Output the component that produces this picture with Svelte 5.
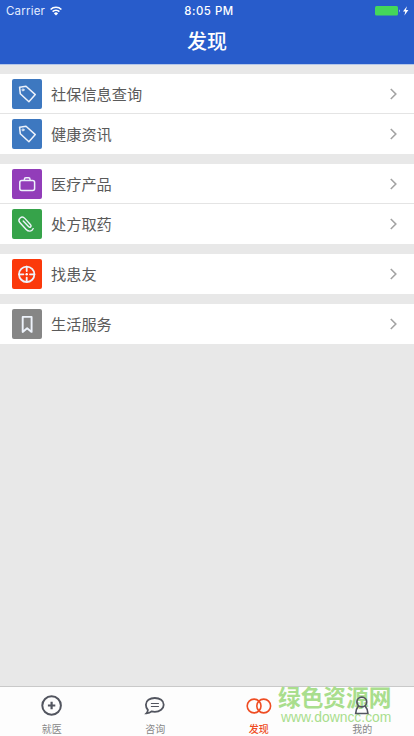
<svelte:options runes={true} />

<script lang="ts">
  type Item = { label: string; icon: string; color: string }

  const groups: Item[][] = [
    [
      { label: '社保信息查询', icon: 'tag', color: '#3d78c0' },
      { label: '健康资讯', icon: 'tag', color: '#3d78c0' },
    ],
    [
      { label: '医疗产品', icon: 'bag', color: '#923db9' },
      { label: '处方取药', icon: 'clip', color: '#36a34a' },
    ],
    [{ label: '找患友', icon: 'target', color: '#fb390b' }],
    [{ label: '生活服务', icon: 'bookmark', color: '#868686' }],
  ]

  const tabs = [
    { label: '就医', icon: 'plus' },
    { label: '咨询', icon: 'chat' },
    { label: '发现', icon: 'rings' },
    { label: '我的', icon: 'user' },
  ]

  let active = $state('发现')
</script>

<div class="app">
  <header>
    <div class="status">
      <div class="carrier">
        <span>Carrier</span>
        <svg width="12" height="10" viewBox="0 0 12 10" fill="none" stroke="#fff" stroke-width="1.6">
          <path d="M.6 3.500a7.700 7.700 0 0 1 10.800 0M2.600 5.700a4.900 4.900 0 0 1 6.800 0" />
          <path d="M6 9.500 3.900 7.400a3 3 0 0 1 4.200 0z" fill="#fff" stroke="none" />
        </svg>
      </div>
      <span class="time">8:05 PM</span>
      <div class="power">
        <svg width="35" height="12" viewBox="0 0 35 12">
          <rect x="0" y="1" width="23" height="9.500" rx="1.500" fill="#44d75a" />
          <path d="M24 4.200q1.400 1.600 0 3.200z" fill="#dce7fb" />
          <path d="M31.900 1.200 28 6.400h2.300l-.9 4.200 4-5.500h-2.400z" fill="#fff" />
        </svg>
      </div>
    </div>
    <h1>发现</h1>
  </header>

  <main>
    {#each groups as group}
      <div class="group">
        {#each group as item}
          <div class="row">
            <div class="tile" style:background={item.color}>
              <svg width="30" height="30" viewBox="0 0 30 30">
                {#if item.icon === 'tag'}
                  <path d="M7.600 8.200 14 7.200l9.300 8.400-6.400 7.200-8.600-8z" />
                  <circle cx="11" cy="10.900" r="1" stroke-width="1" />
                {:else if item.icon === 'bag'}
                  <rect x="7.800" y="11.500" width="14.800" height="9.900" rx="2" />
                  <path d="M12.400 11.300v-1q0-1.500 1.500-1.500h2.600q1.500 0 1.500 1.500v1" />
                {:else if item.icon === 'clip'}
                  <path
                    d="m11.200 11.900 5.300 5.700c1.600 1.600 3.500-.2 2.100-1.900l-5.800-6.300c-3-3.200-7.700.8-5 4.200l6.400 6.900c2.400 2.500 5.900 2 7-.9"
                    stroke-width="1.400"
                  />
                {:else if item.icon === 'target'}
                  <circle cx="14.700" cy="15.300" r="7.700" stroke-width="1.800" />
                  <path d="M14.700 7.600V12M14.700 18.600V23M7 15.300h4.400M18 15.300h4.400" stroke-width="1.800" />
                  <circle cx="14.700" cy="15.300" r="1.200" class="dot" />
                {:else}
                  <path d="M10.700 7.900h8.900v15l-4.450-3.600-4.450 3.600z" stroke-width="1.900" />
                {/if}
              </svg>
            </div>
            <span class="label">{item.label}</span>
            <svg class="chevron" width="7" height="12" viewBox="0 0 7 12">
              <path d="m.8 1 5 5-5 5" />
            </svg>
          </div>
        {/each}
      </div>
    {/each}
  </main>

  <nav>
    {#each tabs as tab}
      <button class:active={active === tab.label} onclick={() => (active = tab.label)}>
        <svg width="26" height="24" viewBox="0 0 26 24">
          {#if tab.icon === 'plus'}
            <circle cx="12.600" cy="11.500" r="9.300" />
            <path d="M12.600 7.800v7.400M8.900 11.500h7.400" stroke-width="2.200" />
          {:else if tab.icon === 'chat'}
            <path
              d="M12.800 4c5 0 8.900 2.700 8.900 6.700s-3.900 7.100-8.900 7.100c-1.200 0-2.200-.1-3.200-.4-1.300 1.300-3 1.900-5.200 1.900.9-.9 1.400-2 1.500-3.300-1.300-1.300-2-3.200-2-5.300C3.900 6.700 7.800 4 12.800 4z"
              stroke-width="1.800"
            />
            <path d="M8.900 9.500h8M8.900 12.500h8" stroke-width="1.200" />
          {:else if tab.icon === 'rings'}
            <circle cx="8.100" cy="12" r="6.900" stroke-width="1.600" />
            <circle cx="17.700" cy="12" r="6.900" stroke-width="1.600" />
          {:else}
            <circle cx="12.800" cy="8" r="4.900" stroke-width="1.700" />
            <path d="M9.600 11.700c-1.700 2-2.700 4.500-2.900 7.800h12.200c-.2-3.300-1.200-5.800-2.900-7.800" stroke-width="1.700" />
          {/if}
        </svg>
        <span>{tab.label}</span>
      </button>
    {/each}
    <div class="watermark">
      <strong>绿色资源网</strong>
      <span>www.downcc.com</span>
    </div>
  </nav>
</div>

<style>
  :global(body) {
    margin: 0;
  }

  .app {
    display: flex;
    flex-direction: column;
    width: 100%;
    height: 100vh;
    overflow: hidden;
    background: #e8e8e8;
    font-family: 'Noto Sans CJK SC', sans-serif;
  }

  header {
    box-sizing: border-box;
    height: 65px;
    flex-shrink: 0;
    background: #285ccb;
    border-bottom: 1px solid #b4c6e8;
    color: #fff;
  }

  .status {
    display: grid;
    grid-template-columns: 1fr auto 1fr;
    align-items: center;
    height: 20px;
    padding: 0 4px 0 6px;
    font-family: Inter, sans-serif;
    font-size: 11.4px;
    line-height: 20px;
  }

  .carrier {
    display: flex;
    align-items: center;
    gap: 5px;
    color: #e3ecff;
    font-size: 11.5px;
    letter-spacing: 0.2px;
  }
  .carrier span {
    padding-top: 1px;
  }

  .time {
    padding: 1px 0 0 2px;
    font-weight: 500;
    letter-spacing: 0.5px;
  }

  .power {
    display: flex;
    justify-content: flex-end;
  }

  h1 {
    margin: 0;
    font-size: 20px;
    font-weight: 500;
    line-height: 42px;
    text-align: center;
  }

  main {
    display: flex;
    flex: 1;
    flex-direction: column;
    gap: 10px;
    padding-top: 9px;
  }

  .group {
    background: #fff;
  }

  .row {
    box-sizing: border-box;
    display: flex;
    align-items: center;
    height: 40px;
    padding: 0 17px 0 12px;
  }
  .row + .row {
    box-shadow: 0 -1px #e4e4e4;
  }

  .tile {
    width: 30px;
    height: 30px;
    border-radius: 2px;
  }
  .tile svg {
    display: block;
    fill: none;
    stroke: #eef3fb;
    stroke-width: 1.5;
    stroke-linecap: round;
    stroke-linejoin: round;
  }
  .tile .dot {
    fill: #fff;
    stroke: none;
  }

  .label {
    flex: 1;
    margin-left: 9px;
    padding-bottom: 2px;
    color: #5a5a5a;
    font-size: 15.2px;
    line-height: 38px;
  }

  .chevron {
    fill: none;
    stroke: #a3a3a3;
    stroke-width: 1.6;
  }

  nav {
    position: relative;
    isolation: isolate;
    box-sizing: border-box;
    display: grid;
    grid-template-columns: repeat(4, 1fr);
    height: 50px;
    flex-shrink: 0;
    border-top: 1px solid #c9c9c9;
    background: #fdfdfd;
  }

  button {
    display: flex;
    flex-direction: column;
    align-items: center;
    gap: 5px;
    padding: 7px 0 0;
    border: 0;
    background: none;
    color: #878787;
    font: inherit;
    font-size: 10px;
    line-height: 12px;
  }
  button svg {
    flex-shrink: 0;
    fill: none;
    stroke: #52555f;
    stroke-width: 2;
  }
  button.active {
    color: #ef4c22;
    font-weight: 500;
  }
  button.active svg {
    stroke: #ef4c22;
  }

  .watermark {
    position: absolute;
    z-index: -1;
    top: -2px;
    left: 278px;
    display: flex;
    flex-direction: column;
    color: #a9de8d;
    pointer-events: none;
    white-space: nowrap;
  }
  .watermark strong {
    font-size: 22.7px;
    font-weight: 700;
    line-height: 24px;
  }
  .watermark span {
    padding-left: 3px;
    font-family: 'Liberation Sans', sans-serif;
    font-size: 13.9px;
    line-height: 16px;
  }
</style>
